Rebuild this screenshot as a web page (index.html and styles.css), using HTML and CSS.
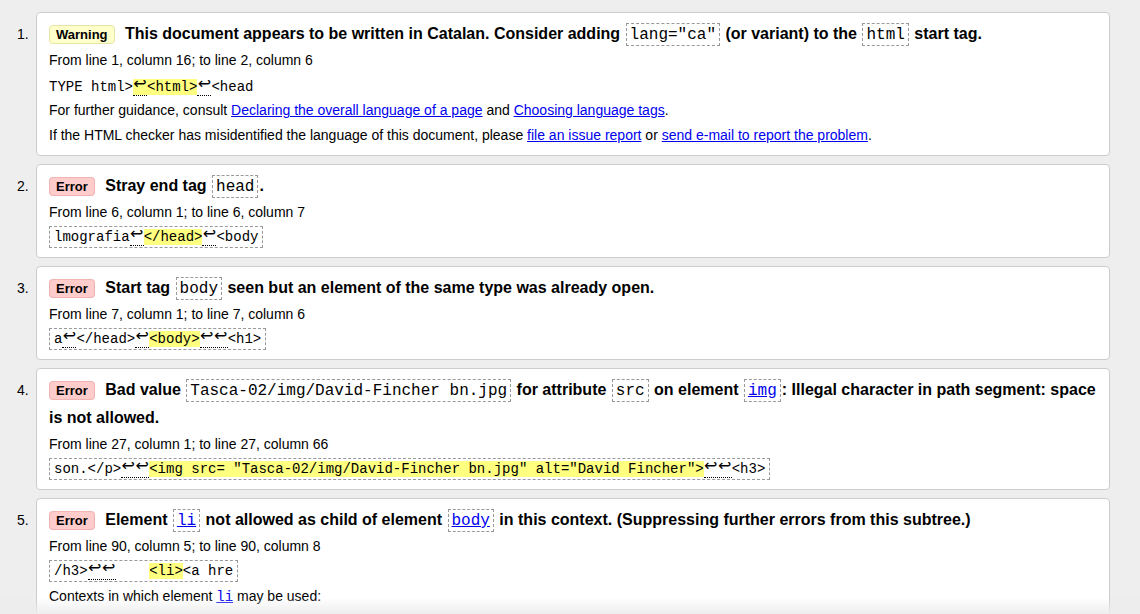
FILE: index.html
```html
<!DOCTYPE html>
<html lang="en">
<head>
<meta charset="utf-8">
<title>Nu Html Checker results</title>
<link rel="stylesheet" href="styles.css">
</head>
<body>
<ol class="messages">
  <li class="msg">
    <span class="num">1.</span>
    <div class="card">
      <p class="title"><strong class="badge warning">Warning</strong> This document appears to be written in Catalan. Consider adding <code class="tc">lang="ca"</code> (or variant) to the <code class="tc">html</code> start tag.</p>
      <p class="line">From line 1, column 16; to line 2, column 6</p>
      <p class="line"><code class="extract plain">TYPE html&gt;<mark class="hl"><span class="lf"><i>↩</i></span>&lt;html&gt;</mark><span class="lf"><i>↩</i></span>&lt;head</code></p>
      <p class="line">For further guidance, consult <a href="#">Declaring the overall language of a page</a> and <a href="#">Choosing language tags</a>.</p>
      <p class="line">If the HTML checker has misidentified the language of this document, please <a href="#">file an issue report</a> or <a href="#">send e-mail to report the problem</a>.</p>
    </div>
  </li>
  <li class="msg">
    <span class="num">2.</span>
    <div class="card">
      <p class="title"><strong class="badge error">Error</strong> Stray end tag <code class="tc">head</code>.</p>
      <p class="line">From line 6, column 1; to line 6, column 7</p>
      <p class="line"><code class="extract">lmografia<span class="lf"><i>↩</i></span><mark class="hl">&lt;/head&gt;</mark><span class="lf"><i>↩</i></span>&lt;body</code></p>
    </div>
  </li>
  <li class="msg">
    <span class="num">3.</span>
    <div class="card">
      <p class="title"><strong class="badge error">Error</strong> Start tag <code class="tc">body</code> seen but an element of the same type was already open.</p>
      <p class="line">From line 7, column 1; to line 7, column 6</p>
      <p class="line"><code class="extract">a<span class="lf"><i>↩</i></span>&lt;/head&gt;<span class="lf"><i>↩</i></span><mark class="hl">&lt;body&gt;</mark><span class="lf"><i>↩</i><i>↩</i></span>&lt;h1&gt;</code></p>
    </div>
  </li>
  <li class="msg">
    <span class="num">4.</span>
    <div class="card">
      <p class="title"><strong class="badge error">Error</strong> Bad value <code class="tc">Tasca-02/img/David-Fincher bn.jpg</code> for attribute <code class="tc">src</code> on element <code class="tc"><a href="#">img</a></code>: Illegal character in path segment: space is not allowed.</p>
      <p class="line">From line 27, column 1; to line 27, column 66</p>
      <p class="line"><code class="extract">son.&lt;/p&gt;<span class="lf"><i>↩</i><i>↩</i></span><mark class="hl">&lt;img src= "Tasca-02/img/David-Fincher bn.jpg" alt="David Fincher"&gt;</mark><span class="lf"><i>↩</i><i>↩</i></span>&lt;h3&gt;</code></p>
    </div>
  </li>
  <li class="msg">
    <span class="num">5.</span>
    <div class="card">
      <p class="title"><strong class="badge error">Error</strong> Element <code class="tc"><a href="#">li</a></code> not allowed as child of element <code class="tc"><a href="#">body</a></code> in this context. (Suppressing further errors from this subtree.)</p>
      <p class="line">From line 90, column 5; to line 90, column 8</p>
      <p class="line"><code class="extract">/h3&gt;<span class="lf"><i>↩</i><i>↩</i></span>    <mark class="hl">&lt;li&gt;</mark>&lt;a hre</code></p>
      <p class="line">Contexts in which element <code class="ic"><a href="#">li</a></code> may be used:</p>
      <p class="line">Inside <code class="ic">ol</code> elements.</p>
      <p class="line">Inside <code class="ic">ul</code> elements.</p>
    </div>
  </li>
</ol>
<div class="fade"></div>
</body>
</html>
```

FILE: styles.css
```css
html {
  overflow: hidden;
}

body {
  margin: 0;
  background: #eeeeee;
  color: #000;
  font-family: "Liberation Sans", Arial, sans-serif;
  font-size: 14px;
}

.messages {
  list-style: none;
  margin: 12px 30px 0 0;
  padding: 0;
}

.msg {
  display: flex;
  margin-bottom: 8px;
}

.num {
  box-sizing: border-box;
  width: 36px;
  flex: none;
  padding-left: 17px;
  padding-top: 8px;
  line-height: 28px;
  font-size: 14px;
}

.card {
  flex: 1;
  background: #fff;
  border: 1px solid #cccccc;
  border-radius: 4px;
  padding: 7px 12px;
}

.card p {
  margin: 0;
}

.title {
  font-size: 16px;
  font-weight: bold;
  line-height: 28px;
}

.line {
  line-height: 25px;
}

.badge {
  font-size: 13px;
  font-weight: bold;
  line-height: 15px;
  padding: 1px 6px;
  border: 1px solid;
  border-radius: 4px;
  margin-right: 6px;
}

.warning {
  background: #ffffcc;
  border-color: #e6e6a8;
}

.error {
  background: #ffcccc;
  border-color: #f2b3b3;
}

code {
  font-family: "Liberation Mono", "Courier New", monospace;
  line-height: 1;
}

.tc {
  font-size: 16px;
  font-weight: normal;
  border: 1px dashed #999;
  padding: 2px 3px 1px;
  margin: 0 1px;
}

.ic {
  font-size: 14px;
}

.extract {
  display: inline-block;
  font-size: 14px;
  line-height: 19px;
  white-space: pre;
  border: 1px dashed #999;
  padding: 0 4px;
  vertical-align: 1px;
}

.extract.plain {
  border: none;
  padding: 0;
  vertical-align: -1px;
}

.hl {
  background: #ffff80;
  color: inherit;
}

.lf {
  border-bottom: 1px dotted #000;
}

.lf i {
  display: inline-block;
  width: 14px;
  font-style: normal;
  font-family: "DejaVu Sans", sans-serif;
  font-size: 16px;
  line-height: 13px;
  text-align: center;
  vertical-align: 2px;
}

a {
  color: #0000ee;
  text-decoration: underline;
}

.fade {
  position: fixed;
  left: 0;
  right: 0;
  bottom: 0;
  height: 16px;
  background: linear-gradient(rgba(238, 238, 238, 0), rgba(236, 236, 236, 0.95));
  pointer-events: none;
}
```
